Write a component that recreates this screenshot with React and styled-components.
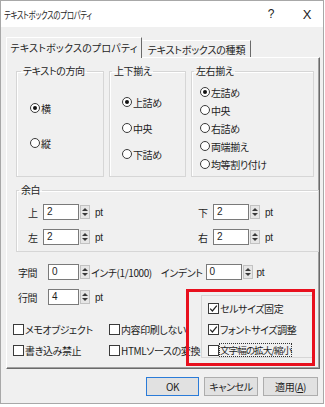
import React from 'react';
import styled, { createGlobalStyle } from 'styled-components';

const Global = createGlobalStyle`
  * { box-sizing: border-box; }
  html, body { margin: 0; padding: 0; background: #ffffff; }
  body {
    font-family: "Noto Sans CJK JP", "Liberation Sans", sans-serif;
    font-size: 10px;
    color: #1e1e1e;
    font-feature-settings: "palt";
    letter-spacing: -0.4px;
  }
`;

const Win = styled.div`
  width: 324px;
  height: 404px;
  border: 1px solid #a8a8a8;
  background: #f0f0f0;
  display: flex;
  flex-direction: column;
`;

const TitleBar = styled.div`
  height: 26px;
  background: #ffffff;
  display: flex;
  align-items: center;
  padding: 0 0 0 3px;
`;

const TitleText = styled.div`
  flex: 1;
  font-size: 10px;
  transform: scaleX(0.74);
  transform-origin: left center;
  white-space: nowrap;
`;

const TitleBtn = styled.div`
  width: ${(p) => p.$w}px;
  text-align: center;
  font-family: "Liberation Sans", sans-serif;
  font-size: ${(p) => p.$size}px;
  color: #222;
`;

const Body = styled.div`
  flex: 1;
  display: flex;
  flex-direction: column;
  padding: 10px 5px 0 5px;
`;

const TabRow = styled.div`
  display: flex;
  align-items: flex-end;
  height: 20px;
`;

const Tab = styled.div`
  position: relative;
  z-index: 1;
  width: ${(p) => p.$w}px;
  height: ${(p) => (p.$active ? 21 : 17)}px;
  margin-bottom: ${(p) => (p.$active ? -1 : 0)}px;
  background: #f0f0f0;
  border-top: 1px solid #ffffff;
  border-left: 1px solid ${(p) => (p.$active ? '#ffffff' : 'transparent')};
  border-right: 1px solid #6a6a6a;
  display: flex;
  align-items: center;
  justify-content: center;
  padding-bottom: ${(p) => (p.$active ? 2 : 0)}px;
  letter-spacing: ${(p) => (p.$active ? '0.2px' : '-0.2px')};
  white-space: nowrap;
`;

const Panel = styled.div`
  width: 314px;
  height: 312px;
  border: 1px solid;
  border-color: #ffffff #6a6a6a #6a6a6a #ffffff;
  box-shadow: inset -1px -1px 0 #a0a0a0;
  padding: 7px 0 0 9px;
  display: flex;
  flex-direction: column;
`;

const TopGroups = styled.div`
  display: grid;
  grid-template-columns: 88px 77px 123px;
  column-gap: 5px;
  height: 112px;
`;

const Group = styled.fieldset`
  margin: 0;
  min-width: 0;
  border: 1px solid #d6d6d6;
  box-shadow: 1px 1px 0 #ffffff inset;
  padding: ${(p) => p.$top}px 0 0 ${(p) => p.$left}px;
  display: flex;
  flex-direction: column;
  gap: ${(p) => p.$gap || 0}px;
`;

const Legend = styled.legend`
  margin-left: ${(p) => p.$x}px;
  padding: 0 2px;
  line-height: 12px;
  font-size: 10px;
`;

const RadioRow = styled.div`
  display: flex;
  align-items: center;
  height: 12px;
  gap: 1px;
  white-space: nowrap;
`;

const Circle = styled.span`
  position: relative;
  width: 10px;
  height: 10px;
  border-radius: 50%;
  border: 1px solid #3a3a3a;
  background: #ffffff;
  flex: none;
  &::after {
    content: '';
    display: ${(p) => (p.$on ? 'block' : 'none')};
    position: absolute;
    left: 2px;
    top: 2px;
    width: 4px;
    height: 4px;
    border-radius: 50%;
    background: #111;
  }
`;

const MarginGroup = styled(Group)`
  margin-top: 7px;
  height: 68px;
  display: grid;
  grid-template-columns: 170px auto;
  row-gap: 9px;
  align-content: start;
`;

const Field = styled.div`
  display: flex;
  align-items: center;
  height: 16px;
  white-space: nowrap;
`;

const FieldLabel = styled.span`
  width: ${(p) => p.$w}px;
  flex: none;
`;

const Input = styled.div`
  width: ${(p) => p.$w}px;
  height: 16px;
  border: 1px solid #7a7a7a;
  background: #ffffff;
  font-family: "Liberation Sans Narrow", "Liberation Sans", sans-serif;
  font-size: 10px;
  line-height: 14px;
  padding-left: 3px;
  flex: none;
`;

const Spin = styled.div`
  width: 10px;
  height: 14px;
  margin: 0 ${(p) => p.$after}px 0 1px;
  border: 1px solid #c2c2c2;
  background: #e6e6e6;
  display: flex;
  flex-direction: column;
  align-items: center;
  justify-content: space-evenly;
  flex: none;
`;

const Arrow = styled.span`
  width: 0;
  height: 0;
  border-left: 3px solid transparent;
  border-right: 3px solid transparent;
  ${(p) =>
    p.$up ? 'border-bottom: 3px solid #3a3a3a;' : 'border-top: 3px solid #3a3a3a;'}
`;

const Unit = styled.span`
  font-family: "Liberation Sans", sans-serif;
  font-size: 10px;
`;

const Row = styled.div`
  display: flex;
  align-items: center;
  height: 16px;
  margin-top: ${(p) => p.$top}px;
  padding-left: ${(p) => p.$left}px;
  white-space: nowrap;
`;

const Lower = styled.div`
  display: flex;
  margin-top: 9px;
`;

const LeftCol = styled.div`
  width: 179px;
  margin-left: -9px;
  display: flex;
  flex-direction: column;
`;

const CheckGrid = styled.div`
  display: grid;
  grid-template-columns: 96px auto;
  row-gap: 9px;
  margin-top: 18px;
  padding-left: 6px;
`;

const CheckRow = styled.div`
  display: flex;
  align-items: center;
  height: 12px;
  gap: 1px;
  white-space: nowrap;
`;

const Box = styled.span`
  width: 11px;
  height: 11px;
  border: 1px solid #3a3a3a;
  background: #ffffff;
  flex: none;
  display: flex;
  align-items: center;
  justify-content: center;
`;

const Focus = styled.span`
  outline: 1px dotted #333;
  outline-offset: 0;
  line-height: 12px;
  font-size: 9.5px;
  letter-spacing: -0.9px;
`;

const RedBox = styled.div`
  width: 129px;
  height: 77px;
  border: 3px solid #e8101e;
`;

const InnerGroup = styled.div`
  margin: 3px 0 0 12px;
  height: 63px;
  border: 1px solid #d6d6d6;
  border-right: none;
  padding: 6px 0 0 6px;
  display: flex;
  flex-direction: column;
  gap: 9px;
`;

const Buttons = styled.div`
  display: flex;
  justify-content: flex-end;
  gap: 5px;
  margin-top: 8px;
`;

const Button = styled.div`
  width: ${(p) => p.$w}px;
  height: 19px;
  border: 1px solid ${(p) => (p.$primary ? '#2a7bd8' : '#adadad')};
  background: #e1e1e1;
  display: flex;
  align-items: center;
  justify-content: center;
  white-space: nowrap;
`;

function Radio({ on, children }) {
  return (
    <RadioRow>
      <Circle $on={on} />
      <span>{children}</span>
    </RadioRow>
  );
}

function Check({ on, focus, children }) {
  return (
    <CheckRow>
      <Box>
        {on && (
          <svg width="9" height="9" viewBox="0 0 9 9">
            <path d="M1.2 4.6 L3.4 7 L7.8 1.6" fill="none" stroke="#222" strokeWidth="1.2" />
          </svg>
        )}
      </Box>
      {focus ? <Focus>{children}</Focus> : <span>{children}</span>}
    </CheckRow>
  );
}

function Spinner({ after = 4 }) {
  return (
    <Spin $after={after}>
      <Arrow $up />
      <Arrow />
    </Spin>
  );
}

function MarginField({ label, value }) {
  return (
    <Field>
      <FieldLabel $w={15}>{label}</FieldLabel>
      <Input $w={36}>{value}</Input>
      <Spinner after={5} />
      <Unit>pt</Unit>
    </Field>
  );
}

export default function App() {
  return (
    <>
      <Global />
      <Win>
        <TitleBar>
          <TitleText>テキストボックスのプロパティ</TitleText>
          <TitleBtn $w={14} $size={12}>?</TitleBtn>
          <TitleBtn $w={22} $size={0} />
          <TitleBtn $w={14} $size={13}>X</TitleBtn>
          <TitleBtn $w={9} $size={0} />
        </TitleBar>
        <Body>
          <TabRow>
            <Tab $active $w={136}>テキストボックスのプロパティ</Tab>
            <Tab $w={109}>テキストボックスの種類</Tab>
          </TabRow>
          <Panel>
            <TopGroups>
              <Group $top={25} $left={13} $gap={23}>
                <Legend $x={-9}>テキストの方向</Legend>
                <Radio on>横</Radio>
                <Radio>縦</Radio>
              </Group>
              <Group $top={19} $left={12} $gap={14}>
                <Legend $x={-10}>上下揃え</Legend>
                <Radio on>上詰め</Radio>
                <Radio>中央</Radio>
                <Radio>下詰め</Radio>
              </Group>
              <Group $top={9} $left={8} $gap={6}>
                <Legend $x={-6}>左右揃え</Legend>
                <Radio on>左詰め</Radio>
                <Radio>中央</Radio>
                <Radio>右詰め</Radio>
                <Radio>両端揃え</Radio>
                <Radio>均等割り付け</Radio>
              </Group>
            </TopGroups>

            <MarginGroup $top={8} $left={11}>
              <Legend $x={-9}>余白</Legend>
              <MarginField label="上" value="2" />
              <MarginField label="下" value="2" />
              <MarginField label="左" value="2" />
              <MarginField label="右" value="2" />
            </MarginGroup>

            <Row $top={12} $left={2}>
              <FieldLabel $w={30}>字間</FieldLabel>
              <Input $w={31}>0</Input>
              <Spinner after={1} />
              <span>インチ(1/1000)</span>
              <FieldLabel $w={9} />
              <span>インデント</span>
              <FieldLabel $w={3} />
              <Input $w={36}>0</Input>
              <Spinner after={4} />
              <Unit>pt</Unit>
            </Row>

            <Lower>
              <LeftCol>
                <Row $top={0} $left={11}>
                  <FieldLabel $w={30}>行間</FieldLabel>
                  <Input $w={31}>4</Input>
                  <Spinner after={5} />
                  <Unit>pt</Unit>
                </Row>
                <CheckGrid>
                  <Check>メモオブジェクト</Check>
                  <Check>内容印刷しない</Check>
                  <Check>書き込み禁止</Check>
                  <Check>HTMLソースの変換</Check>
                </CheckGrid>
              </LeftCol>
              <RedBox>
                <InnerGroup>
                  <Check on>セルサイズ固定</Check>
                  <Check on>フォントサイズ調整</Check>
                  <Check focus>文字幅の拡大/縮小</Check>
                </InnerGroup>
              </RedBox>
            </Lower>
          </Panel>
          <Buttons>
            <Button $primary $w={53}>OK</Button>
            <Button $w={54}>キャンセル</Button>
            <Button $w={55}>適用(<u>A</u>)</Button>
          </Buttons>
        </Body>
      </Win>
    </>
  );
}
